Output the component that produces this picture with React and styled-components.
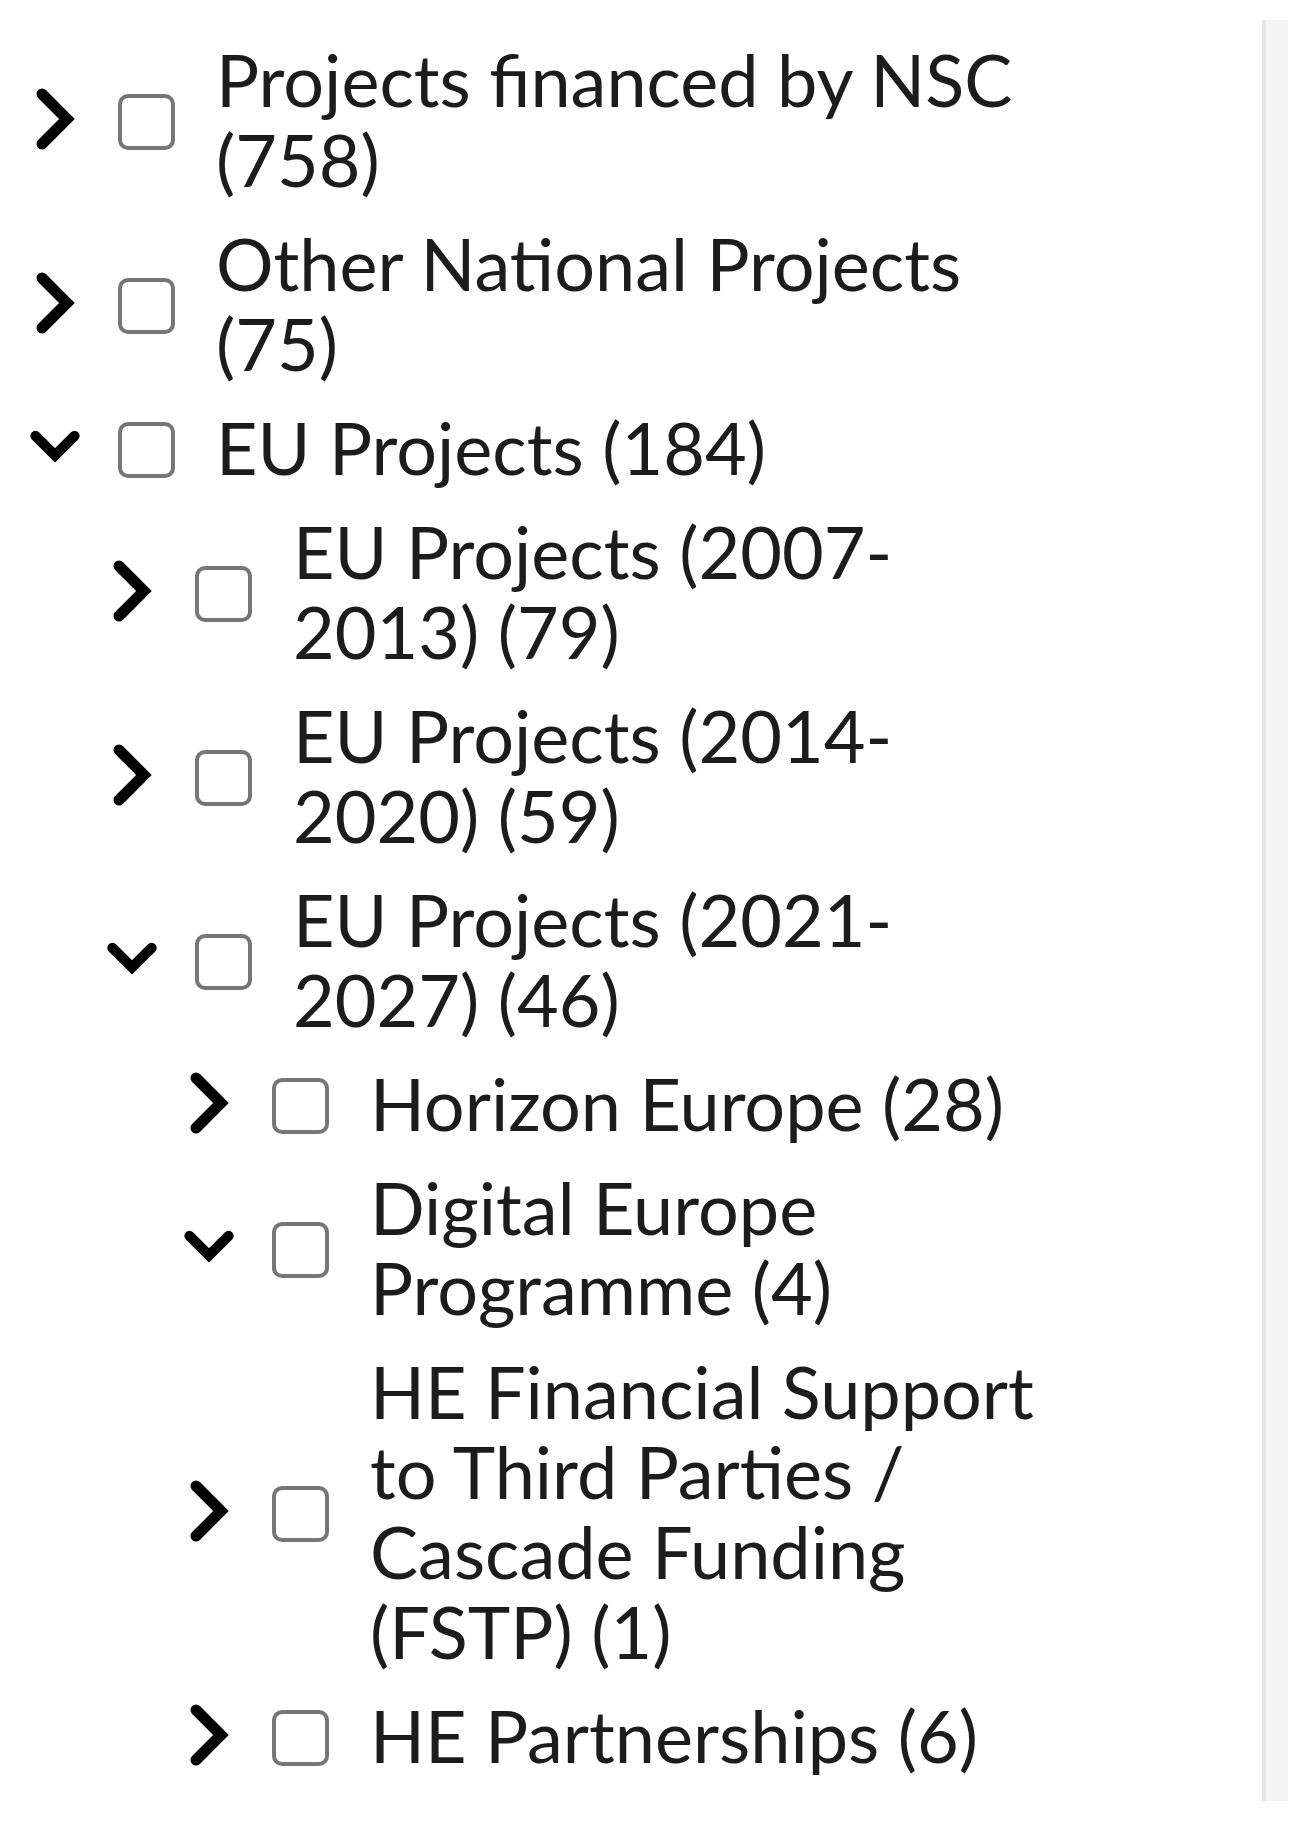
import React from "react";
import styled, { createGlobalStyle } from "styled-components";

const GlobalStyle = createGlobalStyle`
  html, body {
    margin: 0;
    padding: 0;
    background: #ffffff;
  }
  body {
    font-family: Lato, "Open Sans", sans-serif;
  }
`;

const Page = styled.div`
  display: flex;
  width: 1310px;
  height: 1825px;
  box-sizing: border-box;
  padding: 20px 22px 24px 0;
`;

const Tree = styled.ul`
  list-style: none;
  margin: 0;
  padding: 7px 0 0 0;
  width: 1040px;
`;

const Row = styled.li`
  display: flex;
  align-items: center;
  padding: 12px 0 12px ${(p) => 28 + p.level * 77}px;
`;

const Toggle = styled.span`
  display: flex;
  justify-content: center;
  align-items: center;
  width: 54px;
  flex: none;
  margin-right: 36px;
`;

const Box = styled.span`
  flex: none;
  width: 57px;
  height: 56px;
  box-sizing: border-box;
  border: 4px solid #767676;
  border-radius: 10px;
  background: #fff;
  margin-right: 41px;
  margin-top: 6px;
`;

const Label = styled.span`
  flex: 1;
  font-size: 72px;
  line-height: 80px;
  color: #1c1c1c;
`;

const Track = styled.div`
  margin-left: auto;
  width: 26px;
  height: 1781px;
  box-sizing: border-box;
  background: #f5f5f5;
  border-left: 4px solid #e6e6e6;
`;

const Chevron = ({ open }) =>
  open ? (
    <svg width="58" height="42" viewBox="0 0 58 42">
      <polyline points="8,9 29,30 50,9" fill="none" stroke="#000" strokeWidth="11" strokeLinecap="round" />
    </svg>
  ) : (
    <svg width="46" height="66" viewBox="0 0 46 66">
      <polyline points="10,8 35,33 10,58" fill="none" stroke="#000" strokeWidth="11" strokeLinecap="round" />
    </svg>
  );

const items = [
  { level: 0, label: "Projects financed by NSC (758)" },
  { level: 0, label: "Other National Projects (75)" },
  { level: 0, label: "EU Projects (184)", open: true },
  { level: 1, label: "EU Projects (2007-2013) (79)" },
  { level: 1, label: "EU Projects (2014-2020) (59)" },
  { level: 1, label: "EU Projects (2021-2027) (46)", open: true },
  { level: 2, label: "Horizon Europe (28)" },
  { level: 2, label: "Digital Europe Programme (4)", open: true },
  { level: 2, label: "HE Financial Support to Third Parties / Cascade Funding (FSTP) (1)" },
  { level: 2, label: "HE Partnerships (6)" },
];

export default function App() {
  return (
    <>
      <GlobalStyle />
      <Page>
        <Tree>
          {items.map((it) => (
            <Row key={it.label} level={it.level}>
              <Toggle>
                <Chevron open={it.open} />
              </Toggle>
              <Box />
              <Label>{it.label}</Label>
            </Row>
          ))}
        </Tree>
        <Track />
      </Page>
    </>
  );
}
